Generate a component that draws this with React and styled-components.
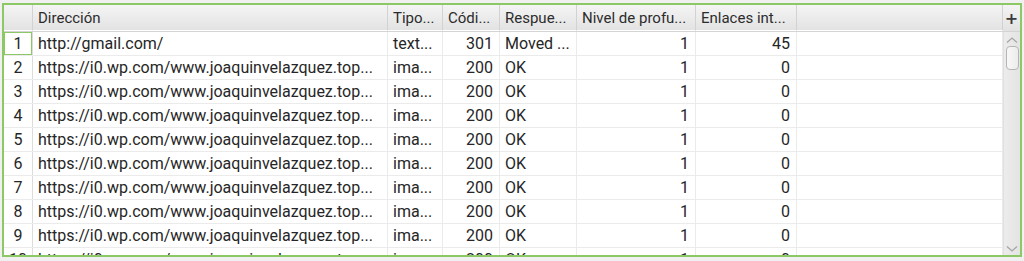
import styled, { createGlobalStyle } from "styled-components";
import React from "react";

const GlobalStyle = createGlobalStyle`
    html, body {
        margin: 0;
        padding: 0;
        background: #f0f0f0;
        font-family: Roboto, "Liberation Sans", sans-serif;
    }
`;

const columns = [
    { title: "Dirección", width: 355 },
    { title: "Tipo...", width: 55 },
    { title: "Códi...", width: 57 },
    { title: "Respue...", width: 77 },
    { title: "Nivel de profu...", width: 119 },
    { title: "Enlaces int...", width: 101 },
];

const template = `29px ${columns.map(c => c.width + "px").join(" ")} 1fr`;

const wpUrl = "https://i0.wp.com/www.joaquinvelazquez.top...";

const rows = [
    ["http://gmail.com/", "text...", "301", "Moved ...", "1", "45"],
    ...Array.from({ length: 9 }, () => [wpUrl, "ima...", "200", "OK", "1", "0"]),
];

export default function App() {
    return (
        <>
            <GlobalStyle />
            <Frame>
                <Header>
                    <HeadCell />
                    {columns.map(c => <HeadCell key={c.title}>{c.title}</HeadCell>)}
                    <HeadCell />
                    <AddButton>+</AddButton>
                </Header>
                <Body>
                    <Rows>
                        {rows.map((r, i) => (
                            <Row key={i}>
                                <NumCell $current={i === 0}>{i + 1}</NumCell>
                                <Cell>{r[0]}</Cell>
                                <Cell>{r[1]}</Cell>
                                <Cell $right>{r[2]}</Cell>
                                <Cell>{r[3]}</Cell>
                                <Cell $right>{r[4]}</Cell>
                                <Cell $right>{r[5]}</Cell>
                                <Cell />
                            </Row>
                        ))}
                    </Rows>
                    <Scrollbar>
                        <Arrow viewBox="0 0 12 8">
                            <path d="M1 6.5 L6 2 L11 6.5" />
                        </Arrow>
                        <Thumb />
                        <Track />
                        <Arrow viewBox="0 0 12 8">
                            <path d="M1 1.5 L6 6 L11 1.5" />
                        </Arrow>
                    </Scrollbar>
                </Body>
            </Frame>
        </>
    );
}

const Frame = styled.div`
    margin: 3px 2px 0 2px;
    width: 1016px;
    height: 250px;
    border: 2px solid #8cc866;
    background: #ffffff;
    display: flex;
    flex-direction: column;
    overflow: hidden;
`;

const Header = styled.div`
    display: grid;
    grid-template-columns: ${template} 17px;
    height: 27px;
    flex-shrink: 0;
    background: linear-gradient(#f4f4f4, #e2e2e2);
    border-bottom: 1px solid #d4d4d4;
    box-sizing: border-box;
`;

const HeadCell = styled.div`
    display: flex;
    align-items: center;
    padding: 0 5px;
    font-size: 15px;
    color: #2c2c2c;
    white-space: nowrap;
    overflow: hidden;
    border-right: 1px solid #d2d2d2;
    border-bottom: 1px solid #ffffff;
`;

const AddButton = styled.div`
    display: flex;
    align-items: center;
    justify-content: center;
    font: 700 16px "DejaVu Sans", sans-serif;
    color: #3a3a3a;
`;

const Body = styled.div`
    flex: 1;
    display: flex;
    min-height: 0;
`;

const Rows = styled.div`
    flex: 1;
    overflow: hidden;
`;

const Row = styled.div`
    display: grid;
    grid-template-columns: ${template};
    height: 24px;
    border-bottom: 1px solid #ebebeb;
    box-sizing: border-box;
`;

const Cell = styled.div`
    display: flex;
    align-items: center;
    justify-content: ${p => (p.$right ? "flex-end" : "flex-start")};
    padding: 0 6px 0 5px;
    font-size: 16px;
    color: #262626;
    white-space: nowrap;
    overflow: hidden;
    border-right: 1px solid #ebebeb;
`;

const NumCell = styled(Cell)`
    justify-content: center;
    padding: 0;
    box-shadow: ${p => (p.$current ? "inset 0 0 0 1px #8cc866" : "none")};
    border-right-color: #dcdcdc;
`;

const Scrollbar = styled.div`
    width: 17px;
    flex-shrink: 0;
    display: flex;
    flex-direction: column;
    align-items: center;
    background: linear-gradient(90deg, #ececec, #e4e4e4);
    border-left: 1px solid #e0e0e0;
    box-sizing: border-box;
`;

const Arrow = styled.svg`
    width: 12px;
    height: 8px;
    margin: 4px 0 2px;
    fill: none;
    stroke: #a6a6a6;
    stroke-width: 1.3;
`;

const Thumb = styled.div`
    width: 13px;
    height: 24px;
    box-sizing: border-box;
    border: 1px solid #b5b5b5;
    border-radius: 4px;
    background: linear-gradient(90deg, #f8f8f8, #ececec);
`;

const Track = styled.div`
    flex: 1;
`;
